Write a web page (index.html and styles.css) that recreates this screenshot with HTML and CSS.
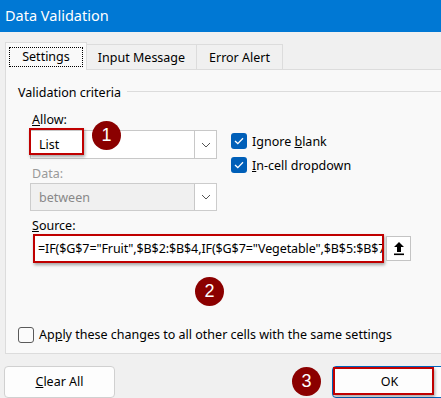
FILE: index.html
```html
<!DOCTYPE html>
<html>
<head>
<meta charset="utf-8">
<link rel="stylesheet" href="styles.css">
</head>
<body>
<div class="dialog">
  <div class="titlebar">Data Validation</div>
  <div class="tabs">
    <div class="tab active"><span class="focus">Settings</span></div>
    <div class="tab">Input Message</div>
    <div class="tab">Error Alert</div>
  </div>
  <div class="panel">
    <div class="legend"><span class="legend-text">Validation criteria</span><span class="legend-line"></span></div>
    <div class="label label-allow"><u>A</u>llow:</div>
    <div class="allow-row">
      <div class="combo">
        <span class="combo-value">List</span>
        <span class="combo-arrow"><svg width="10" height="6" viewBox="0 0 10 6"><path d="M1 1 L5 5 L9 1" fill="none" stroke="#555" stroke-width="1"/></svg></span>
      </div>
      <div class="checks">
        <div class="check"><span class="box checked"><svg width="10" height="8" viewBox="0 0 10 8"><path d="M1 4 L3.8 6.6 L9 1.2" fill="none" stroke="#fff" stroke-width="1.3"/></svg></span><span>Ignore <u>b</u>lank</span></div>
        <div class="check"><span class="box checked"><svg width="10" height="8" viewBox="0 0 10 8"><path d="M1 4 L3.8 6.6 L9 1.2" fill="none" stroke="#fff" stroke-width="1.3"/></svg></span><span><u>I</u>n-cell dropdown</span></div>
      </div>
    </div>
    <div class="label label-data disabled">Data:</div>
    <div class="combo combo-disabled">
      <span class="combo-value">between</span>
      <span class="combo-arrow"><svg width="10" height="6" viewBox="0 0 10 6"><path d="M1 1 L5 5 L9 1" fill="none" stroke="#555" stroke-width="1"/></svg></span>
    </div>
    <div class="label label-source"><u>S</u>ource:</div>
    <div class="source-row">
      <div class="source-input"><span class="source-text">=IF($G$7="Fruit",$B$2:$B$4,IF($G$7="Vegetable",$B$5:$B$7,""))</span></div>
      <div class="ref-btn"><svg width="12" height="15" viewBox="0 0 12 15"><path d="M6 1 L11 6 L8 6 L8 11 L4 11 L4 6 L1 6 Z" fill="#000"/><rect x="1" y="12.5" width="10" height="1.6" fill="#000"/></svg></div>
    </div>
    <div class="apply"><span class="box empty"></span><span>Ap<u>p</u>ly these changes to all other cells with the same settings</span></div>
  </div>
  <div class="footer">
    <div class="btn btn-clear"><u>C</u>lear All</div>
    <div class="btn btn-ok">OK</div>
  </div>

  <div class="mark mark-list"></div>
  <div class="mark mark-ok"></div>
  <div class="badge badge-1">1</div>
  <div class="badge badge-2">2</div>
  <div class="badge badge-3">3</div>
</div>
</body>
</html>
```
FILE: styles.css
```css
* { box-sizing: border-box; }
html, body { margin: 0; padding: 0; }
body {
  width: 441px;
  height: 398px;
  overflow: hidden;
  background: #f0f0f0;
  font-family: "Noto Sans", "Open Sans", sans-serif;
  font-size: 12px;
  color: #000;
}
.dialog { position: relative; width: 441px; height: 398px; overflow: hidden; }
.titlebar {
  height: 32px;
  background: #0078d4;
  color: #fff;
  font-size: 14.5px;
  line-height: 31px;
  padding-left: 5px;
}
.tabs {
  display: flex;
  padding-left: 5px;
  margin-top: 10px;
  height: 27px;
  align-items: flex-end;
}
.tab {
  height: 25px;
  border: 1px solid #dcdcdc;
  border-bottom: none;
  background: #f0f0f0;
  display: flex;
  align-items: center;
  justify-content: center;
  font-size: 12.5px;
  margin-left: -1px;
}
.tab:nth-child(2) { width: 111px; }
.tab:nth-child(3) { width: 87px; }
.tab.active {
  height: 28px;
  width: 82px;
  margin-left: 0;
  background: #f9f9f9;
  position: relative;
  z-index: 1;
  margin-bottom: -1px;
}
.focus {
  border: 1px dotted #000;
  width: 74px;
  height: 20px;
  display: flex;
  align-items: center;
  justify-content: center;
}
.panel {
  margin-left: 5px;
  height: 285px;
  border: 1px solid #dcdcdc;
  border-right: none;
  background: #f9f9f9;
  padding-left: 12px;
  display: flex;
  flex-direction: column;
}
.legend {
  display: flex;
  align-items: center;
  height: 18px;
  margin-top: 13px;
  flex: none;
}
.legend-text { font-size: 12.5px; }
.legend-line { flex: 1; height: 1px; background: #dcdcdc; margin-left: 6px; margin-top: -2px; }
.label { font-size: 12.5px; padding-left: 14px; height: 17px; line-height: 17px; flex: none; }
.label-allow { margin-top: 10px; }
.label.disabled { color: #9a9a9a; }
.allow-row { display: flex; align-items: flex-start; margin-top: 2px; height: 29px; flex: none; }
.combo {
  margin-left: 12px;
  width: 187px;
  height: 29px;
  border: 1px solid #c8c8c8;
  background: #fff;
  display: flex;
  align-items: stretch;
  flex: none;
}
.combo-value { flex: 1; padding-left: 8px; display: flex; align-items: center; font-size: 12.5px; }
.combo-arrow {
  width: 22px;
  border-left: 1px solid #c8c8c8;
  background: #fff;
  display: flex;
  align-items: center;
  justify-content: center;
}
.combo-disabled { background: #f0f0f0; border-color: #cccccc; }
.combo-disabled .combo-value { color: #888; }
.checks { margin-left: 14px; margin-top: 3px; display: flex; flex-direction: column; gap: 8px; }
.check { display: flex; align-items: center; gap: 5px; font-size: 12.5px; height: 16px; }
.box {
  width: 16px;
  height: 16px;
  border-radius: 3px;
  display: flex;
  align-items: center;
  justify-content: center;
  flex: none;
}
.box.checked { background: #005fb8; }
.box.empty { border: 1px solid #5a5a5a; background: #fbfbfb; }
.label-data { margin-top: 6px; }
.label-data + .combo { margin-top: 1px; height: 28px; }
.label-source { margin-top: 6px; }
.source-row { display: flex; align-items: center; margin-top: 0px; padding-left: 15px; flex: none; }
.source-input {
  width: 351px;
  height: 29px;
  border: 2px solid #c00000;
  background: #fff;
  box-shadow: 1px 2px 3px rgba(0,0,0,0.35);
  overflow: hidden;
  white-space: nowrap;
  display: flex;
  align-items: center;
  padding-left: 3px;
}
.source-text { font-size: 12.5px; letter-spacing: -0.1px; }
.ref-btn {
  margin-left: 2px;
  width: 25px;
  height: 25px;
  border: 1px solid #c4c4c4;
  background: #fff;
  display: flex;
  align-items: center;
  justify-content: center;
}
.apply {
  display: flex;
  align-items: center;
  gap: 5px;
  margin-top: 63px;
  height: 17px;
  font-size: 12.5px;
  flex: none;
}
.footer {
  display: flex;
  justify-content: space-between;
  margin-top: 12px;
  padding-left: 4px;
}
.btn {
  height: 32px;
  background: #fdfdfd;
  border: 1px solid #d0d0d0;
  border-radius: 4px;
  display: flex;
  align-items: center;
  justify-content: center;
  font-size: 12.5px;
  padding-bottom: 2px;
}
.btn-clear { width: 111px; }
.btn-ok { width: 115px; margin-right: -6px; border: 1px solid #0067c0; }
.mark {
  position: absolute;
  border: 2px solid #c00000;
  box-shadow: 1px 2px 3px rgba(0,0,0,0.35);
}
.mark-list { left: 29px; top: 128px; width: 55px; height: 27px; }
.mark-ok { left: 333px; top: 367px; width: 101px; height: 28px; }
.badge {
  position: absolute;
  width: 29px;
  height: 29px;
  border-radius: 50%;
  background: #8b0000;
  color: #fff;
  font-family: "Liberation Sans", Arial, sans-serif;
  font-size: 18px;
  display: flex;
  align-items: center;
  justify-content: center;
}
.badge-1 { left: 92px; top: 121px; }
.badge-2 { left: 195px; top: 277px; }
.badge-3 { left: 292px; top: 367px; }
```
